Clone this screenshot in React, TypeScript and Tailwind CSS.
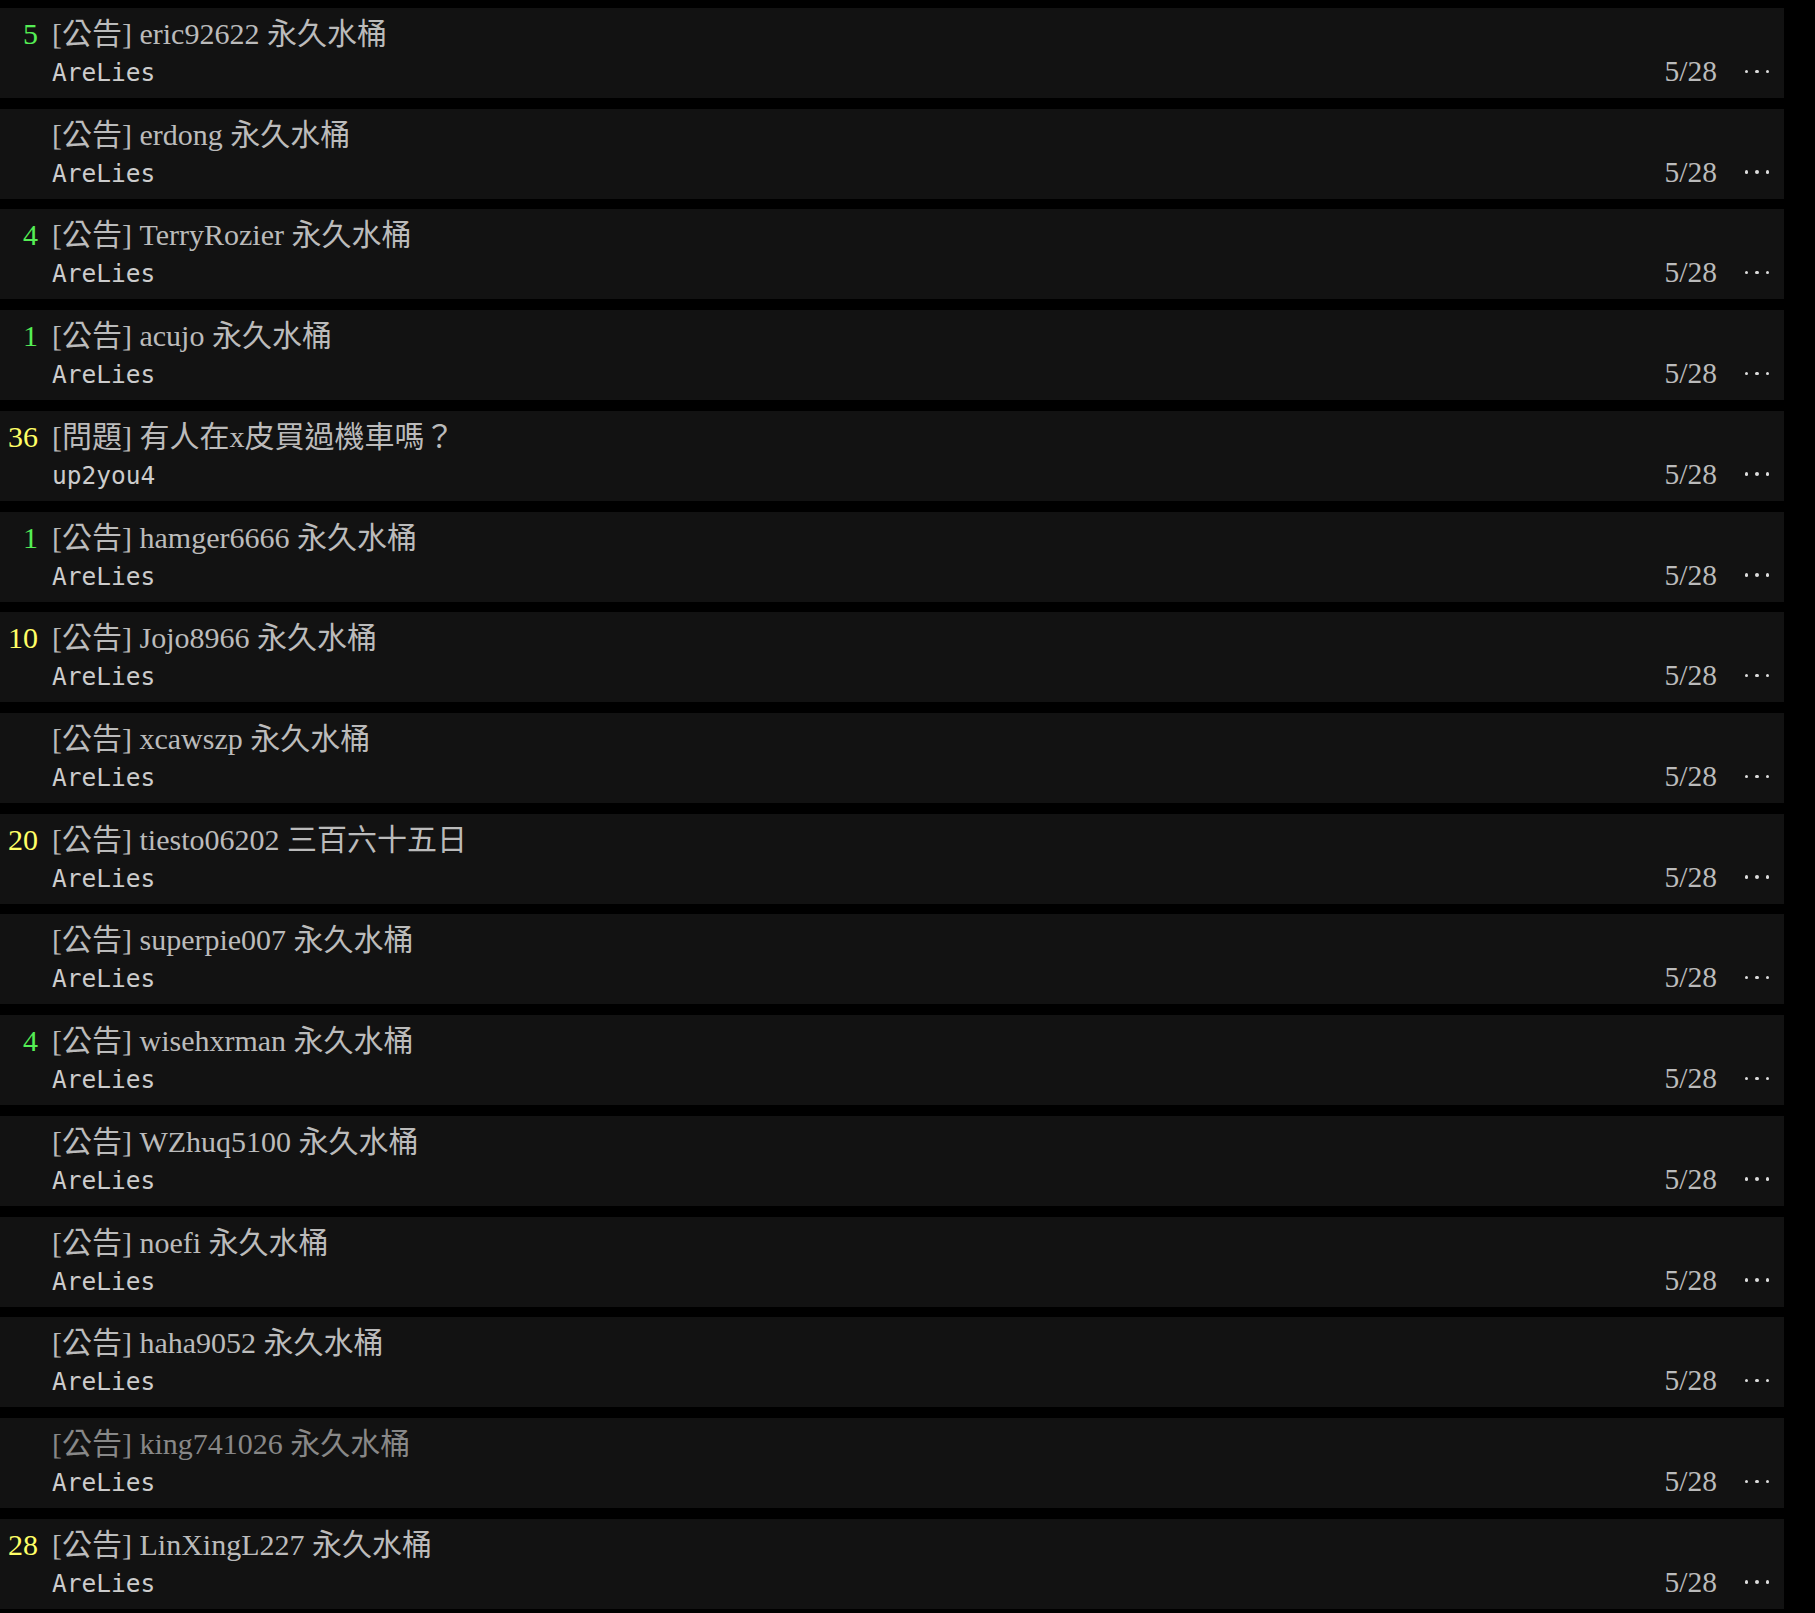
import React from "react";

type Post = {
  count: string;
  title: string;
  author: string;
  date: string;
  read?: boolean;
};

const posts: Post[] = [
  { count: "5", title: "[公告] eric92622 永久水桶", author: "AreLies", date: "5/28" },
  { count: "", title: "[公告] erdong 永久水桶", author: "AreLies", date: "5/28" },
  { count: "4", title: "[公告] TerryRozier 永久水桶", author: "AreLies", date: "5/28" },
  { count: "1", title: "[公告] acujo 永久水桶", author: "AreLies", date: "5/28" },
  { count: "36", title: "[問題] 有人在x皮買過機車嗎？", author: "up2you4", date: "5/28" },
  { count: "1", title: "[公告] hamger6666 永久水桶", author: "AreLies", date: "5/28" },
  { count: "10", title: "[公告] Jojo8966 永久水桶", author: "AreLies", date: "5/28" },
  { count: "", title: "[公告] xcawszp 永久水桶", author: "AreLies", date: "5/28" },
  { count: "20", title: "[公告] tiesto06202 三百六十五日", author: "AreLies", date: "5/28" },
  { count: "", title: "[公告] superpie007 永久水桶", author: "AreLies", date: "5/28" },
  { count: "4", title: "[公告] wisehxrman 永久水桶", author: "AreLies", date: "5/28" },
  { count: "", title: "[公告] WZhuq5100 永久水桶", author: "AreLies", date: "5/28" },
  { count: "", title: "[公告] noefi 永久水桶", author: "AreLies", date: "5/28" },
  { count: "", title: "[公告] haha9052 永久水桶", author: "AreLies", date: "5/28" },
  { count: "", title: "[公告] king741026 永久水桶", author: "AreLies", date: "5/28", read: true },
  { count: "28", title: "[公告] LinXingL227 永久水桶", author: "AreLies", date: "5/28" },
];

// push counts: single digits in green, two digits in yellow
function countClass(count: string) {
  return count.length >= 2 ? "text-[#ffff66]" : "text-[#55ee55]";
}

const serif = "font-['Liberation_Serif','Noto_Sans_CJK_TC',serif]";
const mono = "font-['DejaVu_Sans_Mono',monospace]";

function PostRow({ post }: { post: Post }) {
  return (
    <div className="flex h-[90px] w-[1784px] bg-[#121212]">
      <div
        className={`w-[38px] shrink-0 pt-[9px] text-right text-[30px] leading-[34px] ${serif} ${countClass(post.count)}`}
      >
        {post.count}
      </div>
      <div className="ml-[14px] flex min-w-0 flex-1 flex-col pt-[9px]">
        <div
          className={`text-[30px] leading-[34px] ${serif} ${post.read ? "text-[#888888]" : "text-[#bbbbbb]"}`}
        >
          {post.title}
        </div>
        <div className={`mt-[6px] text-[24.5px] leading-[32px] text-[#cccccc] ${mono}`}>
          {post.author}
        </div>
      </div>
      <div className="flex shrink-0 items-end pb-[10px] pr-[15px]">
        <span className={`text-[29.5px] leading-[33px] text-[#bbbbbb] ${serif}`}>{post.date}</span>
        <span className="mb-[15px] ml-[28px] flex w-[24px] items-center gap-[7px]">
          <span className="h-[3.5px] w-[3.5px] rounded-full bg-[#dddddd]" />
          <span className="h-[3.5px] w-[3.5px] rounded-full bg-[#dddddd]" />
          <span className="h-[3.5px] w-[3.5px] rounded-full bg-[#dddddd]" />
        </span>
      </div>
    </div>
  );
}

export default function App() {
  return (
    <div className="min-h-[1613px] w-full bg-black pt-[8px]">
      <div className="flex flex-col gap-[10.73px]">
        {posts.map((p, i) => (
          <PostRow key={i} post={p} />
        ))}
      </div>
    </div>
  );
}
